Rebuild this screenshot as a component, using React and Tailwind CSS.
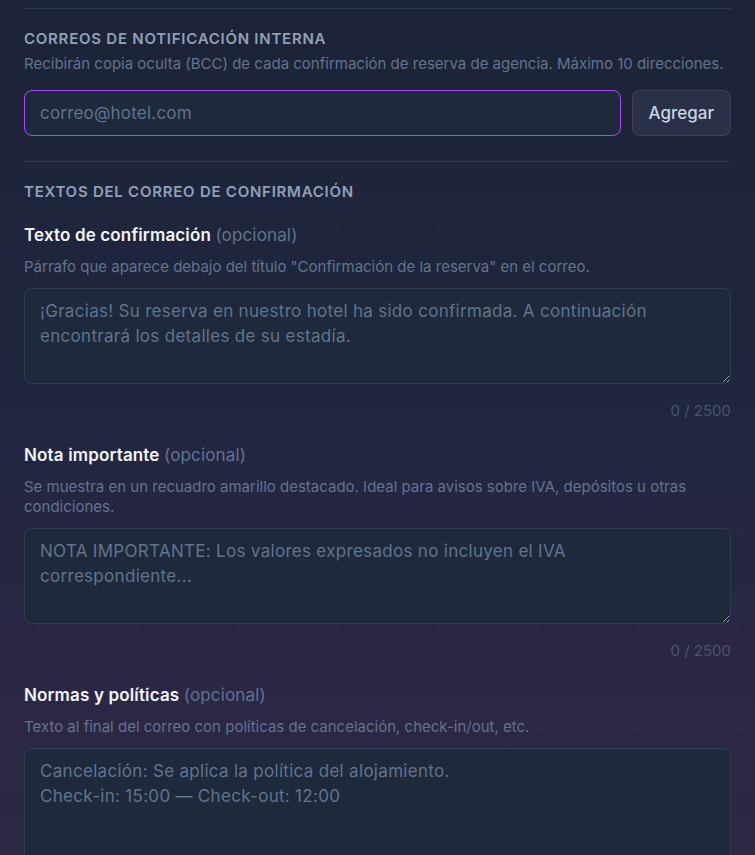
const fields = [
  {
    label: "Texto de confirmación",
    help: 'Párrafo que aparece debajo del título "Confirmación de la reserva" en el correo.',
    placeholder:
      "¡Gracias! Su reserva en nuestro hotel ha sido confirmada. A continuación encontrará los detalles de su estadía.",
  },
  {
    label: "Nota importante",
    help: "Se muestra en un recuadro amarillo destacado. Ideal para avisos sobre IVA, depósitos u otras condiciones.",
    placeholder:
      "NOTA IMPORTANTE: Los valores expresados no incluyen el IVA correspondiente...",
  },
  {
    label: "Normas y políticas",
    help: "Texto al final del correo con políticas de cancelación, check-in/out, etc.",
    placeholder:
      "Cancelación: Se aplica la política del alojamiento.\nCheck-in: 15:00 — Check-out: 12:00",
    tall: true,
  },
];

const App = () => {
  return (
    <div className="min-h-screen w-full bg-[linear-gradient(180deg,#1c2336_0%,#212640_45%,#2b2746_80%,#2a2843_100%)] font-['Inter',sans-serif] overflow-hidden">
      <div className="min-h-screen bg-[radial-gradient(circle,rgba(59,130,246,0.08)_1px,transparent_1.5px)] bg-[size:100px_100px] bg-[position:-12px_-21px] px-6 pt-2">
        {/* correos internos */}
        <div className="border-t border-slate-700/70 pt-5 pb-[25px]">
          <h3 className="text-[15px] leading-5 font-semibold tracking-wider uppercase text-slate-400">
            Correos de notificación interna
          </h3>
          <p className="mt-[5px] text-[15px] leading-5 text-slate-500">
            Recibirán copia oculta (BCC) de cada confirmación de reserva de agencia. Máximo 10 direcciones.
          </p>
          <div className="mt-4 flex gap-[11px]">
            <input
              type="email"
              placeholder="correo@hotel.com"
              className="flex-1 min-w-0 rounded-lg border border-purple-500 bg-[#1e293b] px-[15px] py-2.5 text-[17px] leading-6 tracking-[0.2px] text-slate-200 placeholder:text-slate-500 outline-none"
            />
            <button className="rounded-lg border border-slate-600/50 bg-[#2a3047] px-4 py-2.5 text-[17px] leading-6 font-medium text-slate-300">
              Agregar
            </button>
          </div>
        </div>

        {/* textos del correo */}
        <div className="border-t border-slate-700/70 pt-5">
          <h3 className="text-[15px] leading-5 font-semibold tracking-wider uppercase text-slate-400">
            Textos del correo de confirmación
          </h3>
          <div className="mt-[21px] flex flex-col gap-[22px]">
            {fields.map((f) => (
              <div key={f.label}>
                <label className="block text-[17px] leading-6 font-semibold tracking-[0.15px] text-slate-100">
                  {f.label} <span className="font-normal text-slate-500">(opcional)</span>
                </label>
                <p className="mt-[10px] text-[15px] leading-5 text-slate-500">{f.help}</p>
                <textarea
                  placeholder={f.placeholder}
                  className={
                    f.tall
                      ? "mt-[11px] block w-full h-36 rounded-lg border border-slate-700/80 bg-[#1e293b] px-[15px] py-2.5 text-[17px] leading-[25px] tracking-[0.3px] text-slate-200 placeholder:text-slate-500 outline-none"
                      : "mt-[11px] block w-full h-24 rounded-lg border border-slate-700/80 bg-[#1e293b] px-[15px] py-2.5 text-[17px] leading-[25px] tracking-[0.3px] text-slate-200 placeholder:text-slate-500 outline-none"
                  }
                />
                {!f.tall && (
                  <div className="mt-[17px] text-right text-[15px] leading-5 text-slate-600">0 / 2500</div>
                )}
              </div>
            ))}
          </div>
        </div>
      </div>
    </div>
  );
};

export default App;
